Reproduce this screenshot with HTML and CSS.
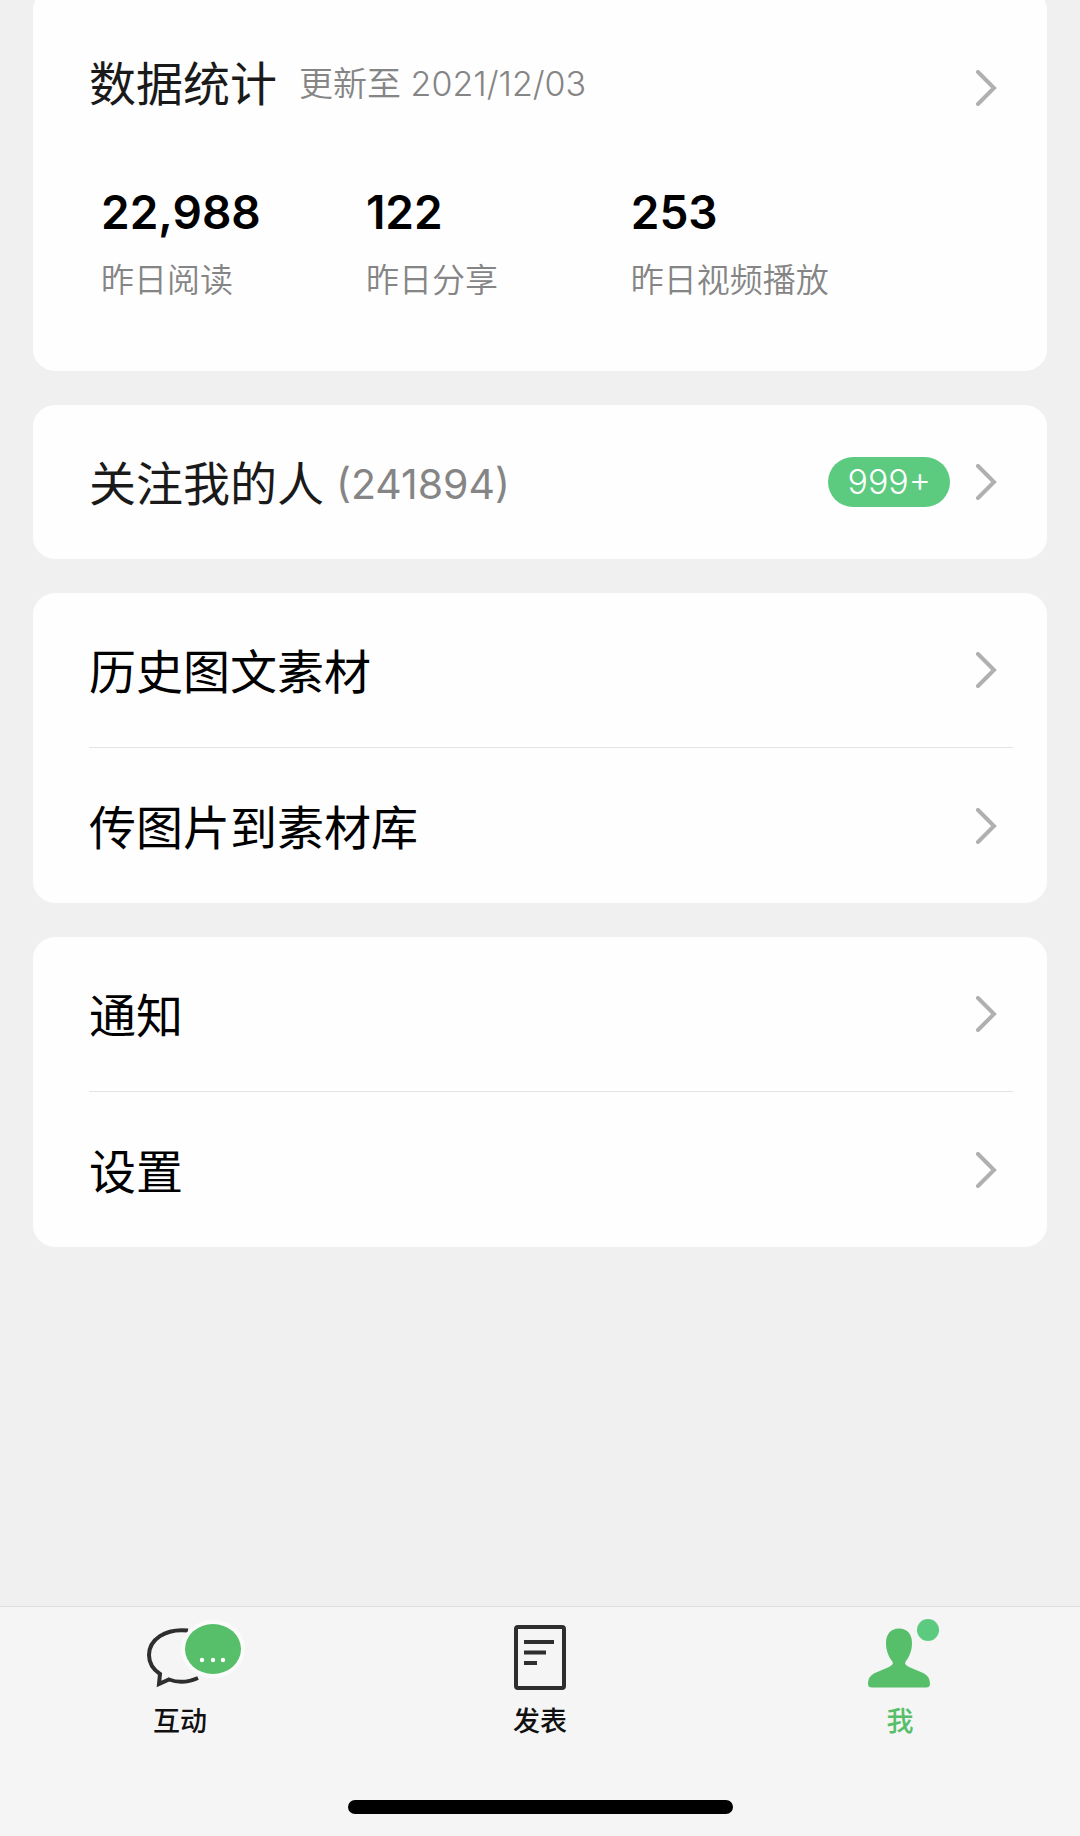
FILE: index.html
```html
<!DOCTYPE html>
<html lang="zh-CN">
<head>
    <meta charset="UTF-8">
    <meta name="viewport" content="width=device-width, initial-scale=1.0">
    <title>我</title>
    <link rel="stylesheet" href="styles.css">
</head>
<body>
    <main class="content">
        <section class="card stats-card">
            <a class="stats-header" href="#stats">
                <span class="title">数据统计</span>
                <span class="updated">更新至 2021/12/03</span>
                <svg class="chevron" viewBox="0 0 22 36"><path d="M3 2 L19 18 L3 34"/></svg>
            </a>
            <div class="stats">
                <div class="stat">
                    <div class="stat-value">22,988</div>
                    <div class="stat-label">昨日阅读</div>
                </div>
                <div class="stat">
                    <div class="stat-value">122</div>
                    <div class="stat-label">昨日分享</div>
                </div>
                <div class="stat">
                    <div class="stat-value">253</div>
                    <div class="stat-label">昨日视频播放</div>
                </div>
            </div>
        </section>

        <section class="card">
            <a class="row" href="#followers">
                <span class="title row-label">关注我的人</span>
                <span class="count row-label">(241894)</span>
                <span class="badge">999+</span>
                <svg class="chevron" viewBox="0 0 22 36"><path d="M3 2 L19 18 L3 34"/></svg>
            </a>
        </section>

        <section class="card">
            <a class="row" href="#history">
                <span class="row-label">历史图文素材</span>
                <svg class="chevron" viewBox="0 0 22 36"><path d="M3 2 L19 18 L3 34"/></svg>
            </a>
            <a class="row" href="#upload">
                <span class="row-label">传图片到素材库</span>
                <svg class="chevron" viewBox="0 0 22 36"><path d="M3 2 L19 18 L3 34"/></svg>
            </a>
        </section>

        <section class="card">
            <a class="row" href="#notice">
                <span class="row-label">通知</span>
                <svg class="chevron" viewBox="0 0 22 36"><path d="M3 2 L19 18 L3 34"/></svg>
            </a>
            <a class="row" href="#settings">
                <span class="row-label">设置</span>
                <svg class="chevron" viewBox="0 0 22 36"><path d="M3 2 L19 18 L3 34"/></svg>
            </a>
        </section>
    </main>

    <footer class="tabbar">
        <nav class="tabs">
            <a class="tab" href="#interact">
                <svg class="tab-icon" viewBox="0 0 128 76">
                    <path class="outline" d="M72 13.500 C49 11 33 23 33 38 C33 46 38 53 44 57 L43 67 L53 62.500 C62 66 73 65 82 61"/>
                    <ellipse class="halo" cx="97" cy="32" rx="32" ry="29"/>
                    <ellipse class="green" cx="97" cy="32" rx="28" ry="25"/>
                    <circle class="dot" cx="86" cy="43" r="2.200"/>
                    <circle class="dot" cx="97" cy="43" r="2.200"/>
                    <circle class="dot" cx="107" cy="43" r="2.200"/>
                </svg>
                <span class="tab-label">互动</span>
            </a>
            <a class="tab" href="#publish">
                <svg class="tab-icon" viewBox="0 0 128 76">
                    <rect class="outline" x="40" y="10" width="48" height="61" rx="2"/>
                    <path class="outline" d="M48 25 H78 M48 35.500 H70 M48 46 H61"/>
                </svg>
                <span class="tab-label">发表</span>
            </a>
            <a class="tab active" href="#me">
                <svg class="tab-icon" viewBox="0 0 128 76">
                    <path class="green" d="M63 11.500 C54 11.500 50 18 50 26 C50 34 53 40 56 44 C58 47 56 48 53 50 L40 55.500 C34 58 32 62 32 67 C32 69.500 33.500 70.500 36 70.500 H90 C92.500 70.500 94 69.500 94 67 C94 62 92 58 86 55.500 L73 50 C70 48 68 47 70 44 C73 40 76 34 76 26 C76 18 72 11.500 63 11.500 Z"/>
                    <circle class="unread" cx="92" cy="13" r="11"/>
                </svg>
                <span class="tab-label">我</span>
            </a>
        </nav>
        <div class="home-indicator"></div>
    </footer>
</body>
</html>
```

FILE: styles.css
```css
* {
    box-sizing: border-box;
}
body {
    margin: 0;
    min-height: 100vh;
    display: flex;
    flex-direction: column;
    background-color: #f0f0f0;
    color: #000000;
    font-family: Inter, "Noto Sans CJK SC", sans-serif;
    font-size: 47px;
    line-height: 64px;
}
a {
    color: inherit;
    text-decoration: none;
}
.content {
    flex: 1;
    display: flex;
    flex-direction: column;
    gap: 34px;
    padding: 0 33px 34px;
}
.card {
    background-color: #fefefe;
    border-radius: 22px;
    padding-left: 56px;
}
/* first card is partly scrolled off the top */
.stats-card {
    margin-top: -12px;
    padding-top: 64px;
    padding-bottom: 67px;
}
.stats-header {
    display: flex;
    align-items: center;
    padding-right: 50px;
}
.stats-header .chevron {
    margin-top: 8px;
}
.title {
    color: #1a1a1a;
}
.updated {
    margin-left: 22px;
    color: #858585;
    font-size: 34px;
    font-weight: 350;
}
.chevron {
    width: 22px;
    height: 36px;
    margin-left: auto;
    fill: none;
    stroke: #b0b0b0;
    stroke-width: 4;
    stroke-linecap: round;
}
.stats {
    display: grid;
    grid-template-columns: repeat(3, 28%);
    margin-top: 64px;
    padding-left: 12px;
}
.stat-value {
    font-size: 46px;
    font-weight: 600;
}
.stat-label {
    margin-top: 12px;
    color: #858585;
    font-size: 33px;
    font-weight: 350;
    line-height: 48px;
    white-space: nowrap;
}
.row {
    display: flex;
    align-items: center;
    height: 154px;
    padding-right: 50px;
}
.row + .row {
    height: 156px;
    margin-right: 34px;
    padding-right: 16px;
    border-top: 1px solid #e4e4e4;
}
.row-label {
    padding-top: 4px;
}
.count {
    margin-left: 12px;
    color: #858585;
    font-size: 41px;
}
.badge {
    margin-left: auto;
    padding: 0 19px;
    border-radius: 25px;
    background-color: #5ccb80;
    color: #ffffff;
    font-size: 34px;
    font-weight: 350;
    line-height: 50px;
}
.badge + .chevron {
    margin-left: 25px;
}
.tabbar {
    padding-bottom: 22px;
    border-top: 1px solid #dfdfdf;
    background-color: #f5f5f5;
}
.tabs {
    display: grid;
    grid-template-columns: repeat(3, 1fr);
}
.tab {
    display: flex;
    flex-direction: column;
    align-items: center;
    gap: 9px;
    padding-top: 10px;
    color: #111111;
}
.tab.active {
    color: #57bf6a;
}
.tab-icon {
    width: 128px;
    height: 76px;
    overflow: visible;
}
.tab-label {
    font-size: 27px;
    font-weight: 500;
    line-height: 40px;
}
.outline {
    fill: none;
    stroke: #2e2e2e;
    stroke-width: 4;
}
.halo {
    fill: #fbfbfb;
}
.green {
    fill: #57bf6a;
}
.unread {
    fill: #5ccb80;
}
.dot {
    fill: #ffffff;
}
.home-indicator {
    width: 385px;
    height: 14px;
    margin: 58px auto 0;
    border-radius: 7px;
    background-color: #000000;
}
```
